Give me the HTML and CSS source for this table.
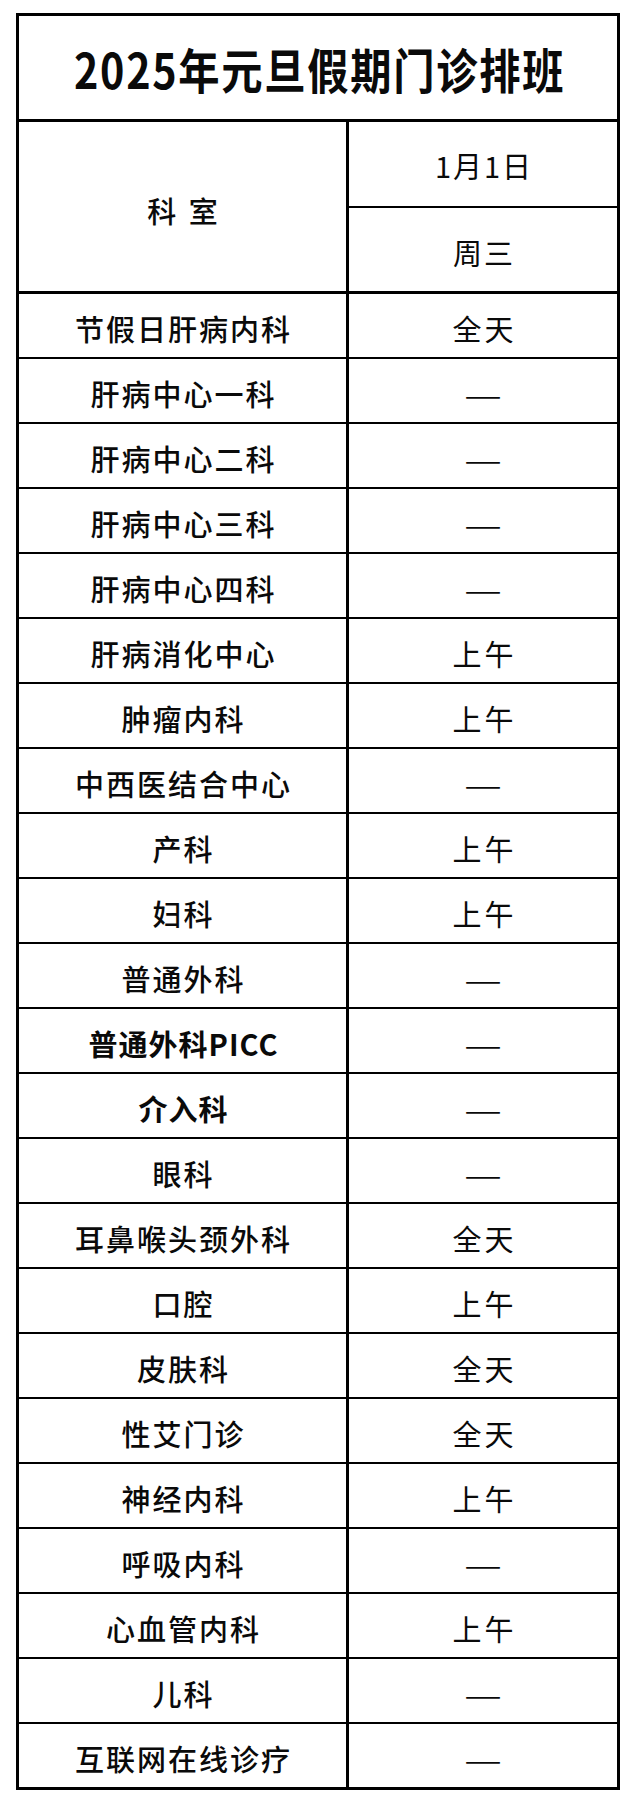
FILE: index.html
```html
<!DOCTYPE html>
<html lang="zh-CN">
<head>
<meta charset="utf-8">
<title>2025年元旦假期门诊排班</title>
<link rel="stylesheet" href="styles.css">
</head>
<body>
<div class="sheet">
  <div class="title"><span class="title-text">2025年元旦假期门诊排班</span></div>
  <div class="head">
    <div class="head-dept">科 室</div>
    <div class="head-day">
      <div class="head-date">1月1日</div>
      <div class="head-week">周三</div>
    </div>
  </div>
  <div class="rows">
    <div class="row"><div class="dept">节假日肝病内科</div><div class="slot">全天</div></div>
    <div class="row"><div class="dept">肝病中心一科</div><div class="slot"><span class="dash">—</span></div></div>
    <div class="row"><div class="dept">肝病中心二科</div><div class="slot"><span class="dash">—</span></div></div>
    <div class="row"><div class="dept">肝病中心三科</div><div class="slot"><span class="dash">—</span></div></div>
    <div class="row"><div class="dept">肝病中心四科</div><div class="slot"><span class="dash">—</span></div></div>
    <div class="row"><div class="dept">肝病消化中心</div><div class="slot">上午</div></div>
    <div class="row"><div class="dept">肿瘤内科</div><div class="slot">上午</div></div>
    <div class="row"><div class="dept">中西医结合中心</div><div class="slot"><span class="dash">—</span></div></div>
    <div class="row"><div class="dept">产科</div><div class="slot">上午</div></div>
    <div class="row"><div class="dept">妇科</div><div class="slot">上午</div></div>
    <div class="row"><div class="dept">普通外科</div><div class="slot"><span class="dash">—</span></div></div>
    <div class="row"><div class="dept strong">普通外科PICC</div><div class="slot"><span class="dash">—</span></div></div>
    <div class="row"><div class="dept strong">介入科</div><div class="slot"><span class="dash">—</span></div></div>
    <div class="row"><div class="dept">眼科</div><div class="slot"><span class="dash">—</span></div></div>
    <div class="row"><div class="dept">耳鼻喉头颈外科</div><div class="slot">全天</div></div>
    <div class="row"><div class="dept">口腔</div><div class="slot">上午</div></div>
    <div class="row"><div class="dept">皮肤科</div><div class="slot">全天</div></div>
    <div class="row"><div class="dept">性艾门诊</div><div class="slot">全天</div></div>
    <div class="row"><div class="dept">神经内科</div><div class="slot">上午</div></div>
    <div class="row"><div class="dept">呼吸内科</div><div class="slot"><span class="dash">—</span></div></div>
    <div class="row"><div class="dept">心血管内科</div><div class="slot">上午</div></div>
    <div class="row"><div class="dept">儿科</div><div class="slot"><span class="dash">—</span></div></div>
    <div class="row"><div class="dept">互联网在线诊疗</div><div class="slot"><span class="dash">—</span></div></div>
  </div>
</div>
</body>
</html>
```

FILE: styles.css
```css
html, body {
  margin: 0;
  padding: 0;
  background: #ffffff;
}

body {
  font-family: "Noto Sans CJK SC", "Noto Sans", sans-serif;
  color: #0a0a0a;
}

.sheet {
  box-sizing: border-box;
  width: 604px;
  margin: 13px 0 0 16px;
  border: 3px solid #000;
}

.title {
  box-sizing: border-box;
  height: 106px;
  border-bottom: 3px solid #000;
  display: flex;
  align-items: center;
  justify-content: center;
  padding-top: 0;
  padding-left: 3px;
  font-size: 48px;
  font-weight: 700;
  letter-spacing: 2px;
  line-height: 1;
}

.title-text {
  display: inline-block;
  transform: scaleX(0.86);
}

.head {
  box-sizing: border-box;
  height: 172px;
  border-bottom: 3px solid #000;
  display: grid;
  grid-template-columns: 330px 1fr;
}

.head-dept {
  border-right: 3px solid #000;
  display: flex;
  align-items: center;
  justify-content: center;
  font-size: 29px;
  font-weight: 500;
  letter-spacing: 3px;
  padding-left: 3px;
  padding-top: 6px;
}

.head-day {
  display: grid;
  grid-template-rows: 86px 1fr;
}

.head-date,
.head-week {
  display: flex;
  align-items: center;
  justify-content: center;
  font-size: 29px;
  font-weight: 400;
  letter-spacing: 2px;
  padding-left: 2px;
}

.head-date {
  box-sizing: border-box;
  border-bottom: 2px solid #000;
  padding-top: 2px;
}

.head-week {
  padding-top: 4px;
}

.rows {
  display: flex;
  flex-direction: column;
}

.row {
  box-sizing: border-box;
  height: 65px;
  border-bottom: 2px solid #000;
  display: grid;
  grid-template-columns: 330px 1fr;
}

.row:last-child {
  height: 63px;
  border-bottom: none;
}

.dept,
.slot {
  display: flex;
  align-items: center;
  justify-content: center;
  padding-top: 6px;
  line-height: 1;
}

.dept {
  border-right: 3px solid #000;
  font-size: 29px;
  font-weight: 500;
  letter-spacing: 2px;
  padding-left: 2px;
}

.dept.strong {
  font-weight: 700;
  letter-spacing: 1px;
}

.slot {
  font-size: 29px;
  font-weight: 400;
  letter-spacing: 3px;
  padding-left: 3px;
}

.dash {
  display: inline-block;
  letter-spacing: 0;
  margin-right: 3px;
  transform: scaleX(1.45);
}
```
